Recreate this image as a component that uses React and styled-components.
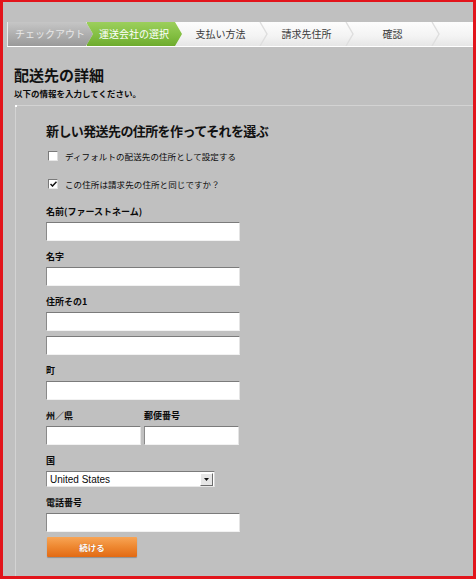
import React from 'react';
import styled, { createGlobalStyle } from 'styled-components';

const jp = `"Noto Sans CJK JP", "DejaVu Sans", sans-serif`;

const GlobalStyle = createGlobalStyle`
  html, body { margin: 0; padding: 0; background: #c0c0c0; }
  * { box-sizing: border-box; }
`;

const steps = [
    { label: '支払い方法' },
    { label: '請求先住所' },
    { label: '確認' },
];

const Frame = styled.div`
    width: 476px;
    height: 579px;
    border: 3px solid #e2141b;
    border-top-width: 2px;
    background: #c0c0c0;
    display: flex;
    flex-direction: column;
    font-family: ${jp};
    color: #0a0a0a;
    overflow: hidden;
`;
const Bar = styled.nav`
    margin: 20px 0 0 4px;
    height: 25px;
    display: flex;
    background: linear-gradient(#fdfdfd, #f3f3f3 60%, #e6e6e6);
    border-bottom: 1px solid #ffffff;
`;
const ArrowStep = styled.div`
    width: ${p => p.$w}px;
    margin-left: ${p => p.$offset}px;
    display: flex;
    align-items: center;
    justify-content: center;
    padding: 0 7px;
    font-size: 10px;
    line-height: 24px;
    white-space: nowrap;
    color: ${p => p.$green ? '#ffffff' : '#e8e8e8'};
    background: ${p => p.$green
        ? 'linear-gradient(#9ccf5c, #83bf42 55%, #6eab2e)'
        : 'linear-gradient(#c6c6c6, #adadad 55%, #9a9a9a)'};
    box-shadow: inset 1px 0 0 #ececec;
    clip-path: ${p => p.$notch
        ? 'polygon(0 0, calc(100% - 7px) 0, 100% 50%, calc(100% - 7px) 100%, 0 100%, 7px 50%)'
        : 'polygon(0 0, calc(100% - 7px) 0, 100% 50%, calc(100% - 7px) 100%, 0 100%)'};
`;
const Step = styled.div`
    width: 86px;
    display: flex;
    align-items: center;
`;
const StepText = styled.span`
    flex: 1;
    text-align: center;
    font-size: 10px;
    line-height: 24px;
    color: #3a3a3a;
    white-space: nowrap;
`;
const Chevron = () => (
    <svg width="9" height="24" viewBox="0 0 9 24">
        <polyline points="1,0 8,12 1,24" fill="none" stroke="#dedede" strokeWidth="1.4" />
    </svg>
);

const Header = styled.header`
    padding: 19px 0 0 11px;
`;
const Title = styled.h1`
    margin: 0;
    font-size: 15px;
    line-height: 18px;
    font-weight: 700;
    color: #111;
`;
const Lead = styled.p`
    margin: 4px 0 0;
    font-size: 8.5px;
    line-height: 11px;
    font-weight: 700;
`;
const Panel = styled.section`
    position: relative;
    flex: 1;
    margin: 6px 0 0 12px;
    border-left: 1px solid #d3d3d3;
    border-top: 1px solid #d3d3d3;
    padding: 15px 0 0 30px;
    &::before {
        content: '';
        position: absolute;
        left: -1px;
        top: -1px;
        width: 2px;
        height: 2px;
        background: #ffffff;
    }
`;
const Heading = styled.h2`
    margin: 0;
    font-size: 13px;
    line-height: 20px;
    font-weight: 700;
    letter-spacing: -0.6px;
    color: #111;
`;
const CheckRow = styled.label`
    display: flex;
    align-items: center;
    gap: 7px;
    height: 14px;
    margin-top: ${p => p.$mt}px;
    padding-left: 2px;
    font-size: 8.5px;
    letter-spacing: 0.1px;
`;
const Box = styled.span`
    width: 10px;
    height: 10px;
    display: inline-flex;
    align-items: center;
    justify-content: center;
    background: #ffffff;
    border: 1px solid;
    border-color: #7a7a7a #dcdcdc #e8e8e8 #7a7a7a;
`;
const Field = styled.div`
    margin-top: ${p => p.$mt || 10}px;
`;
const Label = styled.div`
    font-size: 9px;
    line-height: 12px;
    font-weight: 700;
    margin-bottom: 4px;
    white-space: nowrap;
`;
const Input = styled.input`
    display: block;
    width: ${p => p.$w || 194}px;
    height: 19px;
    margin: ${p => p.$gap ? '5px 0 0' : 0};
    padding: 0 3px;
    background: #ffffff;
    border: 1px solid;
    border-color: #7b7b7b #e4e4e4 #f2f2f2 #8a8a8a;
    outline: none;
`;
const Pair = styled.div`
    display: grid;
    grid-template-columns: 95px 95px;
    column-gap: 3px;
`;
const Select = styled.div`
    width: 169px;
    height: 16px;
    display: flex;
    align-items: center;
    justify-content: space-between;
    background: #ffffff;
    border: 1px solid;
    border-color: #7b7b7b #d8d8d8 #e8e8e8 #8a8a8a;
    font-family: "Liberation Sans", Arial, sans-serif;
    font-size: 10px;
    padding-left: 3px;
`;
const SelectBtn = styled.span`
    width: 13px;
    height: 13px;
    margin-right: 1px;
    display: flex;
    align-items: center;
    justify-content: center;
    background: #e6e6e6;
    border: 1px solid;
    border-color: #ffffff #6d6d6d #6d6d6d #ffffff;
`;
const Submit = styled.button`
    display: block;
    width: 90px;
    height: 20px;
    margin: 5px 0 0 1px;
    padding: 0;
    border: none;
    border-radius: 1px;
    background: linear-gradient(#f8a556, #ef8a33 45%, #e26a14);
    box-shadow: 0 1px 1px rgba(0, 0, 0, 0.25);
    color: #ffffff;
    font-family: ${jp};
    font-size: 8.5px;
    font-weight: 700;
    text-shadow: 0 0 1px rgba(150, 60, 0, 0.6);
    cursor: pointer;
`;

const App = () => (
    <Frame>
        <GlobalStyle />
        <Bar>
            <ArrowStep $w={86} $offset={0}>チェックアウト</ArrowStep>
            <ArrowStep $w={96} $offset={-7} $green $notch>運送会社の選択</ArrowStep>
            {steps.map(step => (
                <Step key={step.label}>
                    <StepText>{step.label}</StepText>
                    <Chevron />
                </Step>
            ))}
        </Bar>
        <Header>
            <Title>配送先の詳細</Title>
            <Lead>以下の情報を入力してください。</Lead>
        </Header>
        <Panel>
            <Heading>新しい発送先の住所を作ってそれを選ぶ</Heading>
            <CheckRow $mt={8}>
                <Box />
                ディフォルトの配送先の住所として設定する
            </CheckRow>
            <CheckRow $mt={14}>
                <Box>
                    <svg width="7" height="6" viewBox="0 0 7 6">
                        <polyline points="0.5,3 2.5,5 6.5,0.8" fill="none" stroke="#111" strokeWidth="1.5" />
                    </svg>
                </Box>
                この住所は請求先の住所と同じですか？
            </CheckRow>
            <Field $mt={15}>
                <Label>名前(ファーストネーム)</Label>
                <Input />
            </Field>
            <Field>
                <Label>名字</Label>
                <Input />
            </Field>
            <Field>
                <Label>住所その1</Label>
                <Input />
                <Input $gap />
            </Field>
            <Field>
                <Label>町</Label>
                <Input />
            </Field>
            <Field>
                <Pair>
                    <Label>州／県</Label>
                    <Label>郵便番号</Label>
                    <Input $w={95} />
                    <Input $w={95} />
                </Pair>
            </Field>
            <Field>
                <Label>国</Label>
                <Select>
                    United States
                    <SelectBtn>
                        <svg width="5" height="3" viewBox="0 0 5 3">
                            <polygon points="0,0 5,0 2.5,3" fill="#111" />
                        </svg>
                    </SelectBtn>
                </Select>
            </Field>
            <Field>
                <Label>電話番号</Label>
                <Input />
            </Field>
            <Submit type="button">続ける</Submit>
        </Panel>
    </Frame>
);

export default App;
